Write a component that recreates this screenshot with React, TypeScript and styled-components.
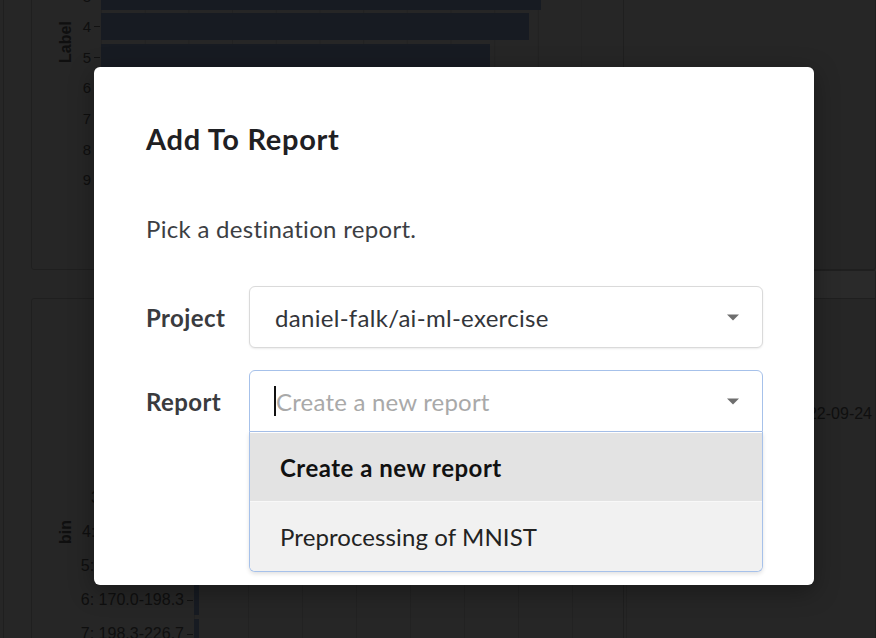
import styled, { createGlobalStyle } from 'styled-components';

const GlobalStyle = createGlobalStyle`
  html, body {
    margin: 0;
    padding: 0;
  }
  body {
    font-family: Lato, "Noto Sans", sans-serif;
    background: #262626;
  }
`;

/* ---------- dashboard behind the dialog ---------- */

const Page = styled.div`
  position: relative;
  width: 876px;
  height: 638px;
  overflow: hidden;
  display: flex;
  background: #e0e0e0;
  font-family: "Liberation Sans", Arial, sans-serif;
`;

const SideRail = styled.div`
  flex: none;
  width: 3px;
  border-right: 1px solid #b8b8b8;
`;

const Dashboard = styled.div`
  flex: 1;
  display: grid;
  grid-template-columns: 593px 1fr;
  column-gap: 12px;
  align-items: start;
  padding-left: 27px;
`;

const Column = styled.div<{ $gap: number }>`
  display: flex;
  flex-direction: column;
  gap: ${(p) => p.$gap}px;
`;

const Card = styled.div<{ $height: number; $offset?: number; $open?: boolean }>`
  box-sizing: border-box;
  height: ${(p) => p.$height}px;
  margin-top: ${(p) => p.$offset ?? 0}px;
  border: 1px solid #b8b8b8;
  border-left-color: ${(p) => (p.$open ? 'transparent' : '#b8b8b8')};
  border-radius: 3px;
  background: #e0e0e0;
`;

const ChartBody = styled.div<{ $top: number }>`
  display: flex;
  padding: ${(p) => p.$top}px 0 0 24px;
`;

const AxisTitle = styled.div`
  width: 20px;
  display: flex;
  align-items: center;
  justify-content: center;
  writing-mode: vertical-rl;
  transform: rotate(180deg);
  font-weight: 700;
  font-size: 16px;
  color: #5c5c5c;
`;

const Rows = styled.div`
  display: flex;
  flex-direction: column;
`;

const Row = styled.div<{ $label: number; $height: number }>`
  display: grid;
  grid-template-columns: ${(p) => p.$label}px 10px 481px;
  height: ${(p) => p.$height}px;
  align-items: center;
`;

const TickLabel = styled.span<{ $size: number }>`
  text-align: right;
  white-space: nowrap;
  font-size: ${(p) => p.$size}px;
  color: #5c5c5c;
`;

const Tick = styled.span`
  width: 6px;
  height: 1px;
  margin-left: 3px;
  background: #6a6a6a;
`;

const Track = styled.div<{ $step: number }>`
  height: 100%;
  display: flex;
  align-items: center;
  background-image: linear-gradient(to right, #c8c8c8 1px, transparent 1px);
  background-size: ${(p) => p.$step}px 100%;
`;

const Bar = styled.div<{ $height: number }>`
  height: ${(p) => p.$height}px;
  background: #879fc8;
`;

const BandHeader = styled.div`
  height: 27px;
  background: #f7f7f7;
  border-bottom: 1px solid #b8b8b8;
`;

const AxisDate = styled.div`
  display: flex;
  justify-content: flex-end;
  padding: 106px 3px 0 0;
  font-size: 16px;
  color: #5c5c5c;
`;

/* ---------- dialog ---------- */

const Overlay = styled.div`
  position: absolute;
  inset: 0;
  box-sizing: border-box;
  padding: 67px 0 0 94px;
  background: rgba(0, 0, 0, 0.83);
  font-family: Lato, "Noto Sans", sans-serif;
`;

const Modal = styled.div`
  box-sizing: border-box;
  width: 720px;
  height: 518px;
  padding: 53px 51px 0 52px;
  background: #fff;
  border-radius: 6px;
  box-shadow: 0 6px 24px rgba(0, 0, 0, 0.35);
`;

const Title = styled.h2`
  margin: 0;
  font-size: 29px;
  line-height: 38px;
  font-weight: 700;
  letter-spacing: 0.7px;
  color: #1f2023;
`;

const Description = styled.p`
  margin: 56px 0 0;
  font-size: 24px;
  line-height: 30px;
  letter-spacing: 0.3px;
  color: #3c3e43;
`;

const Form = styled.div`
  margin-top: 42px;
  display: flex;
  flex-direction: column;
  gap: 22px;
`;

const FieldRow = styled.div`
  display: grid;
  grid-template-columns: 103px 514px;
  align-items: center;
`;

const FieldLabel = styled.label`
  font-size: 24px;
  font-weight: 700;
  letter-spacing: 0.4px;
  color: #3a3b3e;
`;

const Control = styled.div`
  position: relative;
`;

const SelectBox = styled.div<{ $open?: boolean }>`
  box-sizing: border-box;
  height: 62px;
  display: flex;
  align-items: center;
  padding: 0 23px 0 24px;
  border: 1px solid ${(p) => (p.$open ? '#a6c1ea' : '#dadada')};
  border-radius: ${(p) => (p.$open ? '6px 6px 0 0' : '6px')};
  box-shadow: ${(p) => (p.$open ? 'none' : '0 1px 2px rgba(0, 0, 0, 0.08)')};
  background: #fff;
  font-size: 24px;
  letter-spacing: 0.3px;
`;

const Value = styled.span`
  margin-left: 1px;
  color: #33353a;
`;

const Cursor = styled.span`
  width: 2px;
  height: 30px;
  background: #111;
`;

const Placeholder = styled.span`
  color: #a9a9a9;
  letter-spacing: 0.2px;
`;

const Caret = styled.svg`
  margin-left: auto;
  flex: none;
`;

const Menu = styled.div`
  position: absolute;
  top: 62px;
  left: 0;
  right: 0;
  padding-top: 1px;
  background: #fff;
  border: 1px solid #a6c1ea;
  border-top: none;
  border-radius: 0 0 6px 6px;
  box-shadow: 0 2px 4px rgba(0, 0, 0, 0.12);
  overflow: hidden;
`;

const MenuItem = styled.div<{ $active?: boolean; $height: number }>`
  height: ${(p) => p.$height}px;
  display: flex;
  align-items: center;
  padding-left: 30px;
  font-size: 24px;
  font-weight: ${(p) => (p.$active ? 700 : 400)};
  letter-spacing: ${(p) => (p.$active ? '0.5px' : '0.1px')};
  color: ${(p) => (p.$active ? '#111' : '#222')};
  background: ${(p) => (p.$active ? '#e3e3e3' : '#f1f1f1')};
  & + & {
    border-top: 1px solid #f8f8f8;
  }
`;

const labelBars = [380, 300, 420, 440, 428, 389, 360, 410, 300, 380];
const bins = [
  '0: 0.0-28.3',
  '1: 28.3-56.7',
  '2: 56.7-85.0',
  '3: 85.0-113.3',
  '4: 113.3-141.7',
  '5: 141.7-170.0',
  '6: 170.0-198.3',
  '7: 198.3-226.7',
  '8: 226.7-255.0',
];
const binBars = [3, 3, 3, 3, 3, 4, 5, 5, 4];

function CaretIcon() {
  return (
    <Caret width="12" height="7" viewBox="0 0 12 7">
      <path d="M0 0.5h12L6 6.5z" fill="#6e6e6e" />
    </Caret>
  );
}

export default function App() {
  return (
    <>
      <GlobalStyle />
      <Page>
        <SideRail />
        <Dashboard>
          <Column $gap={28}>
            <Card $height={410} $offset={-140}>
              <ChartBody $top={28}>
                <AxisTitle>Label</AxisTitle>
                <Rows>
                  {labelBars.map((w, i) => (
                    <Row key={i} $label={15} $height={30.6}>
                      <TickLabel $size={15}>{i}</TickLabel>
                      <Tick />
                      <Track $step={43.7}>
                        <Bar $height={27} style={{ width: w }} />
                      </Track>
                    </Row>
                  ))}
                </Rows>
              </ChartBody>
            </Card>
            <Card $height={400}>
              <ChartBody $top={80}>
                <AxisTitle>bin</AxisTitle>
                <Rows>
                  {bins.map((b, i) => (
                    <Row key={b} $label={108} $height={34}>
                      <TickLabel $size={16}>{b}</TickLabel>
                      <Tick />
                      <Track $step={54}>
                        <Bar $height={30} style={{ width: binBars[i] }} />
                      </Track>
                    </Row>
                  ))}
                </Rows>
              </ChartBody>
            </Card>
          </Column>
          <Column $gap={0}>
            <Card $height={410} $offset={-140} $open />
            <Card $height={400} $open>
              <BandHeader />
              <AxisDate>2022-09-24</AxisDate>
            </Card>
          </Column>
        </Dashboard>

        <Overlay>
          <Modal>
            <Title>Add To Report</Title>
            <Description>Pick a destination report.</Description>
            <Form>
              <FieldRow>
                <FieldLabel>Project</FieldLabel>
                <Control>
                  <SelectBox>
                    <Value>daniel-falk/ai-ml-exercise</Value>
                    <CaretIcon />
                  </SelectBox>
                </Control>
              </FieldRow>
              <FieldRow>
                <FieldLabel>Report</FieldLabel>
                <Control>
                  <SelectBox $open>
                    <Cursor />
                    <Placeholder>Create a new report</Placeholder>
                    <CaretIcon />
                  </SelectBox>
                  <Menu>
                    <MenuItem $active $height={68}>
                      Create a new report
                    </MenuItem>
                    <MenuItem $height={69}>Preprocessing of MNIST</MenuItem>
                  </Menu>
                </Control>
              </FieldRow>
            </Form>
          </Modal>
        </Overlay>
      </Page>
    </>
  );
}
